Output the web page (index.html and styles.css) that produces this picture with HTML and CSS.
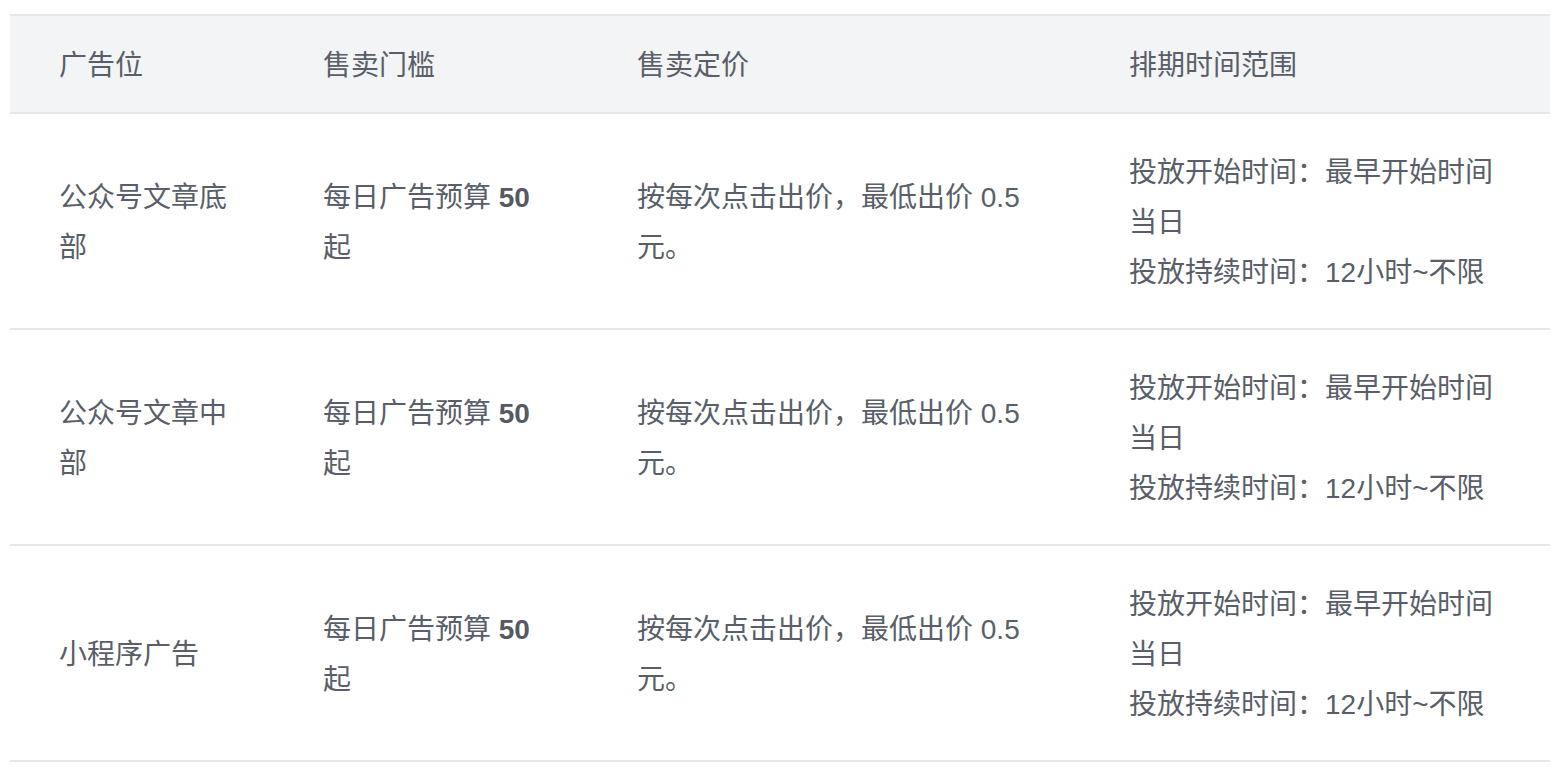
FILE: index.html
```html
<!DOCTYPE html>
<html lang="zh-CN">
<head>
    <meta charset="UTF-8">
    <title>广告位售卖说明</title>
    <meta name="viewport" content="width=device-width,initial-scale=1">
    <link rel="stylesheet" href="styles.css">
</head>
<body>
    <div class="page">
        <table class="ad-table">
            <colgroup>
                <col class="col-slot">
                <col class="col-threshold">
                <col class="col-price">
                <col class="col-schedule">
            </colgroup>
            <thead>
                <tr>
                    <th>广告位</th>
                    <th>售卖门槛</th>
                    <th>售卖定价</th>
                    <th>排期时间范围</th>
                </tr>
            </thead>
            <tbody>
                <tr>
                    <td>公众号文章底部</td>
                    <td>每日广告预算 <strong>50</strong> 起</td>
                    <td>按每次点击出价，最低出价 0.5 元。</td>
                    <td>投放开始时间：最早开始时间当日<br>投放持续时间：12小时~不限</td>
                </tr>
                <tr>
                    <td>公众号文章中部</td>
                    <td>每日广告预算 <strong>50</strong> 起</td>
                    <td>按每次点击出价，最低出价 0.5 元。</td>
                    <td>投放开始时间：最早开始时间当日<br>投放持续时间：12小时~不限</td>
                </tr>
                <tr>
                    <td>小程序广告</td>
                    <td>每日广告预算 <strong>50</strong> 起</td>
                    <td>按每次点击出价，最低出价 0.5 元。</td>
                    <td>投放开始时间：最早开始时间当日<br>投放持续时间：12小时~不限</td>
                </tr>
            </tbody>
        </table>
    </div>
</body>
</html>
```

FILE: styles.css
```css
* {
    margin: 0;
    padding: 0;
    box-sizing: border-box;
}

body {
    font-family: 'Liberation Sans', 'Noto Sans CJK SC', sans-serif;
    background: #fff;
    color: #595e68;
}

.page {
    padding: 14px 6px 0 10px;
}

.ad-table {
    width: 1540px;
    border-collapse: collapse;
    table-layout: fixed;
    font-size: 28px;
    line-height: 50px;
    border-top: 2px solid #e3e6ea;
}

.col-slot { width: 264px; }
.col-threshold { width: 314px; }
.col-price { width: 492px; }
.col-schedule { width: 470px; }

th, td {
    text-align: left;
    vertical-align: middle;
    padding: 4px 47px 0 49px;
    border-bottom: 2px solid #e3e6ea;
    word-break: break-all;
}

th {
    background: #f3f4f6;
    font-weight: normal;
    height: 98px;
}

td {
    height: 216px;
}

td strong {
    font-weight: bold;
    color: #555a63;
}
```
